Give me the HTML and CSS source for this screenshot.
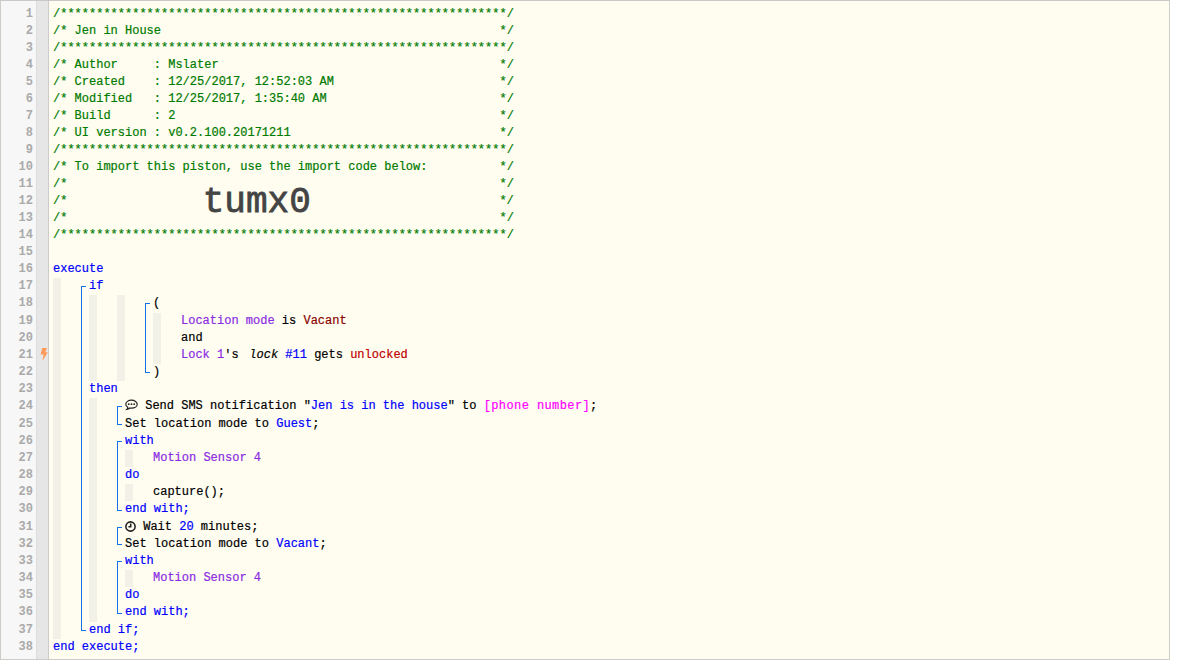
FILE: index.html
```html
<!DOCTYPE html>
<html lang="en">
<head>
<meta charset="utf-8">
<title>Jen in House</title>
<link rel="stylesheet" href="styles.css">
</head>
<body>
<main class="editor">
<div class="nums"><div>1</div><div>2</div><div>3</div><div>4</div><div>5</div><div>6</div><div>7</div><div>8</div><div>9</div><div>10</div><div>11</div><div>12</div><div>13</div><div>14</div><div>15</div><div>16</div><div>17</div><div>18</div><div>19</div><div>20</div><div>21</div><div>22</div><div>23</div><div>24</div><div>25</div><div>26</div><div>27</div><div>28</div><div>29</div><div>30</div><div>31</div><div>32</div><div>33</div><div>34</div><div>35</div><div>36</div><div>37</div><div>38</div></div>
<div class="marks"><svg class="bolt" width="8" height="13" viewBox="0 0 8 13"><path d="M2.2 0H7L5.2 4.2H7.8L2.4 13L3.6 6.6H.6z"/></svg></div>
<div class="code">
<div class="ln c">/*************************************************************<wbr>*/</div>
<div class="ln c">/* Jen in House                                               */</div>
<div class="ln c">/*************************************************************<wbr>*/</div>
<div class="ln c">/* Author     : Mslater                                       */</div>
<div class="ln c">/* Created    : 12/25/2017, 12:52:03 AM                       */</div>
<div class="ln c">/* Modified   : 12/25/2017, 1:35:40 AM                        */</div>
<div class="ln c">/* Build      : 2                                             */</div>
<div class="ln c">/* UI version : v0.2.100.20171211                             */</div>
<div class="ln c">/*************************************************************<wbr>*/</div>
<div class="ln c">/* To import this piston, use the import code below:          */</div>
<div class="ln c">/*                                                            */</div>
<div class="ln c">/*                   <span class="code-big">tumx0</span>*/</div>
<div class="ln c">/*                                                            */</div>
<div class="ln c">/*************************************************************<wbr>*/</div>
<div class="ln c"></div>
<div class="ln k">execute</div>
<div class="nest">
  <div class="guide"></div>
  <div class="bracket">
    <div class="ln k">if</div>
    <div class="nest">
      <div class="guide"></div>
      <div class="nest">
        <div class="guide"></div>
        <div class="bracket">
          <div class="ln">(</div>
          <div class="nest">
            <div class="guide"></div>
            <div class="inner">
              <div class="ln"><span class="d">Location mode</span> is <span class="v">Vacant</span></div>
              <div class="ln">and</div>
              <div class="ln"><span class="d">Lock 1</span>'s <em>lock</em> <span class="k">#11</span> gets <span class="r">unlocked</span></div>
            </div>
          </div>
          <div class="ln">)</div>
        </div>
      </div>
    </div>
    <div class="ln k">then</div>
    <div class="nest">
      <div class="guide"></div>
      <div class="stmts">
        <div class="bracket">
          <div class="ln"><svg class="icon chat" width="13" height="12" viewBox="0 0 13 12"><path class="line" d="M6.5 1.2C3.2 1.2.8 3 .8 5.2c0 1.3.8 2.4 2 3.1-.1.8-.5 1.5-1 2 1.2-.2 2.3-.7 3-1.3.5.1 1.1.1 1.7.1 3.3 0 5.7-1.8 5.7-3.9S9.800 1.200 6.500 1.200z"/><circle cx="3.800" cy="5.200" r=".9"/><circle cx="6.500" cy="5.200" r=".9"/><circle cx="9.200" cy="5.200" r=".9"/></svg> Send SMS notification "<span class="k">Jen is in the house</span>" to <span class="p">[phone number]</span>;</div>
          <div class="ln">Set location mode to <span class="k">Guest</span>;</div>
        </div>
        <div class="bracket">
          <div class="ln k">with</div>
          <div class="nest">
            <div class="guide"></div>
            <div class="ln d">Motion Sensor 4</div>
          </div>
          <div class="ln k">do</div>
          <div class="nest">
            <div class="guide"></div>
            <div class="ln">capture();</div>
          </div>
          <div class="ln k">end with;</div>
        </div>
        <div class="bracket">
          <div class="ln"><svg class="icon clock" width="11" height="11" viewBox="0 0 11 11"><circle class="line" cx="5.500" cy="5.500" r="4.600"/><path class="line" d="M5.700 2.500v3.300H3.400"/></svg> Wait <span class="k">20</span> minutes;</div>
          <div class="ln">Set location mode to <span class="k">Vacant</span>;</div>
        </div>
        <div class="bracket">
          <div class="ln k">with</div>
          <div class="nest">
            <div class="guide"></div>
            <div class="ln d">Motion Sensor 4</div>
          </div>
          <div class="ln k">do</div>
          <div class="ln k">end with;</div>
        </div>
      </div>
    </div>
    <div class="ln k">end if;</div>
  </div>
</div>
<div class="ln k">end execute;</div>
</div>
</main>
</body>
</html>
```
FILE: styles.css
```css
* { box-sizing: border-box; }
html, body { margin: 0; background: #fff; }
body { width: 1178px; height: 668px; overflow: hidden; }

.editor {
  display: flex;
  width: 1170px;
  height: 660px;
  border: 1px solid #cfcdc8;
  border-top-color: #c8c8c8;
  background: #fffdf0;
  font-family: "Liberation Mono", monospace;
  font-size: 12px;
  line-height: 17.18px;
  color: #000;
}

.nums {
  flex: none;
  width: 36px;
  padding: 5px 3px 0 0;
  background: #f7f7f7;
  border-right: 1px solid #ddd;
  color: #aaa;
  font-weight: 700;
  text-align: right;
}
.nums > div { height: 17.18px; }
.nums > div:nth-child(-n+15) { height: 17px; line-height: 17px; }

.marks {
  flex: none;
  position: relative;
  width: 12px;
  background: #e6e6e6;
  border-right: 1px solid #ccc;
}

.bolt { position: absolute; left: 3px; top: 347px; fill: #ff9a5a; }

.code {
  flex: 1;
  min-width: 0;
  padding: 5px 0 0 4px;
  -webkit-text-stroke: 0.2px currentColor;
}

.ln { height: 17.18px; white-space: pre; }
.c { height: 17px; line-height: 17px; color: #007a00; }
.k { color: #0000ff; }
.d { color: #8a2be2; }
.v { color: #8b0000; }
.r { color: #c00000; }
.p { color: #ff00ff; letter-spacing: 0.4px; }
em { margin-left: 3.5px; }

.code-big {
  display: inline-block;
  width: 295.2px;
  margin-left: -1.5px;
  margin-right: 1.5px;
  font-size: 36px;
  line-height: 0;
  color: #444;
  -webkit-text-stroke: 0.8px #444;
  transform: translateY(8px);
}

.nest { display: flex; }
.nest > .ln, .inner, .stmts, .nest > .bracket, .nest > .nest { flex: 1; min-width: 0; }
.guide { flex: none; width: 8px; margin-right: 20px; background: #f2f1e8; }

.bracket { position: relative; padding-left: 8px; }
.bracket::before {
  content: "";
  position: absolute;
  left: 0;
  top: 8px;
  bottom: 8px;
  width: 4px;
  border: 1px solid #1272e6;
  border-right: 0;
}

.icon { vertical-align: -2px; }
.line { fill: none; stroke: #222; stroke-width: 1.2; }
.clock .line { stroke-width: 1.6; }
.chat circle { fill: #222; stroke: none; }
```
